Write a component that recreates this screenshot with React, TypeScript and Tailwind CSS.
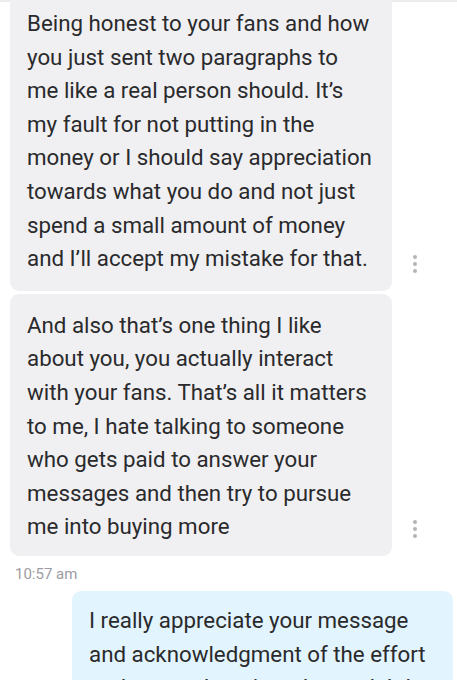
const font = { fontFamily: 'Roboto, "Noto Sans", sans-serif' };

const Dots = () => (
    <div className="w-[45px] flex flex-col items-center gap-[3px] pb-[18px]">
        <span className="w-[4px] h-[4px] rounded-full bg-[#b4b4b8]" />
        <span className="w-[4px] h-[4px] rounded-full bg-[#b4b4b8]" />
        <span className="w-[4px] h-[4px] rounded-full bg-[#b4b4b8]" />
    </div>
);

type BubbleProps = { lines: string[]; extra?: string };

const Lines = ({ lines }: { lines: string[] }) => (
    <>
        {lines.map((l, i) => (
            <span key={i} className="block whitespace-nowrap">{l}</span>
        ))}
    </>
);

const Incoming: React.FC<BubbleProps> = ({ lines, extra = '' }) => (
    <div className="flex items-end">
        <div className={`w-[382px] ml-[10px] bg-[#f0f0f2] rounded-[9px] pl-[17px] pr-[12px] text-[22.3px] leading-[33.6px] text-[#2a2a2c] ${extra}`}>
            <Lines lines={lines} />
        </div>
        <Dots />
    </div>
);

export default function App() {
    return (
        <div className="w-[457px] h-[680px] bg-white overflow-hidden flex flex-col" style={font}>
            <div className="h-[2px] bg-[#ececee] shrink-0" />
            <div className="flex flex-col gap-[3px] -mt-[12px]">
                <Incoming
                    extra="pt-[17px] pb-[15px] rounded-t-none"
                    lines={[
                        'Being honest to your fans and how',
                        'you just sent two paragraphs to',
                        'me like a real person should. It’s',
                        'my fault for not putting in the',
                        'money or I should say appreciation',
                        'towards what you do and not just',
                        'spend a small amount of money',
                        'and I’ll accept my mistake for that.',
                    ]}
                />
                <Incoming
                    extra="pt-[15px] pb-[12px]"
                    lines={[
                        'And also that’s one thing I like',
                        'about you, you actually interact',
                        'with your fans. That’s all it matters',
                        'to me, I hate talking to someone',
                        'who gets paid to answer your',
                        'messages and then try to pursue',
                        'me into buying more',
                    ]}
                />
            </div>
            <div className="pl-[15px] pt-[8px] text-[15px] leading-[20px] text-[#9c9ca2]">10:57 am</div>
            <div className="flex justify-end pr-[4px] pt-[7px]">
                <div className="w-[381px] bg-[#e2f4fd] rounded-[9px] pl-[17px] pr-[10px] pt-[13px] pb-[16px] text-[22.3px] leading-[33.6px] text-[#2a2a2c]">
                    <Lines
                        lines={[
                            'I really appreciate your message',
                            'and acknowledgment of the effort',
                            'and energy I put into the work I do',
                        ]}
                    />
                </div>
            </div>
        </div>
    );
}
